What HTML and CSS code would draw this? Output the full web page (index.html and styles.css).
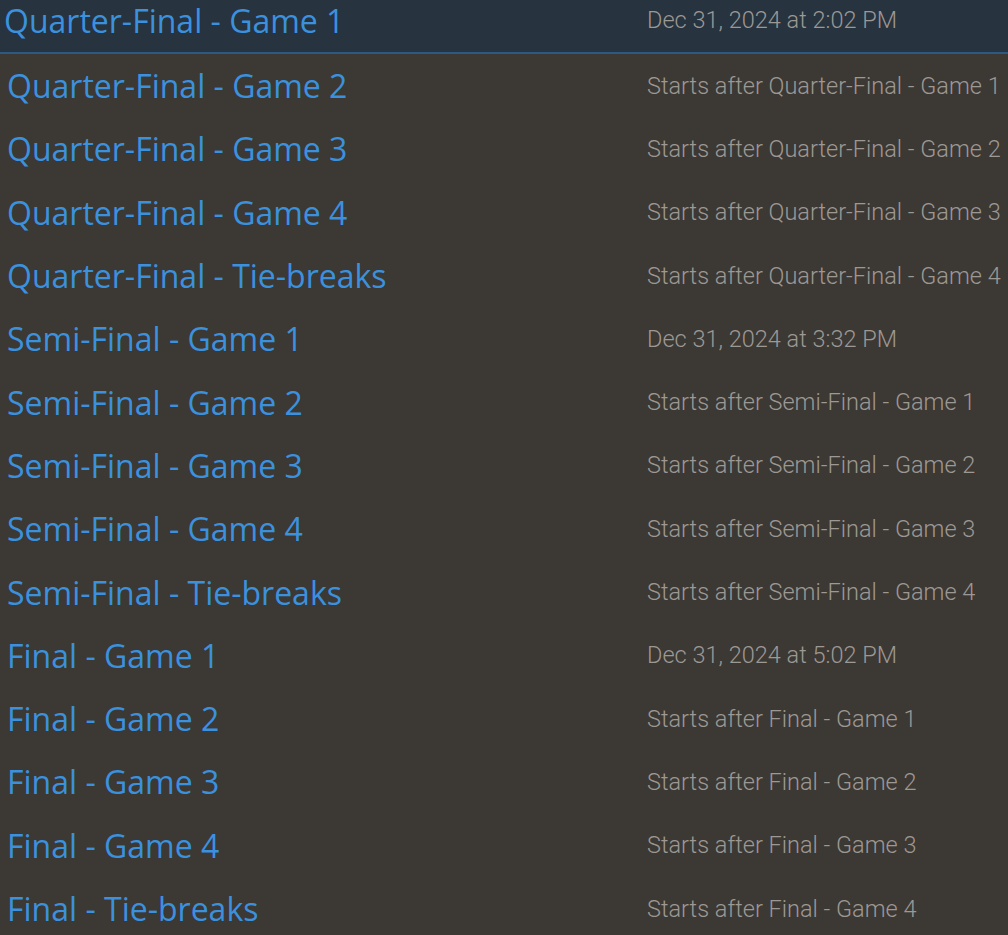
FILE: index.html
```html
<!DOCTYPE html>
<html>
<head>
<meta charset="utf-8">
<link rel="stylesheet" href="styles.css">
</head>
<body>
<ul class="games">
  <li class="game selected"><span class="title">Quarter-Final - Game 1</span><span class="when">Dec 31, 2024 at 2:02 PM</span></li>
  <li class="game"><span class="title">Quarter-Final - Game 2</span><span class="when">Starts after Quarter-Final - Game 1</span></li>
  <li class="game"><span class="title">Quarter-Final - Game 3</span><span class="when">Starts after Quarter-Final - Game 2</span></li>
  <li class="game"><span class="title">Quarter-Final - Game 4</span><span class="when">Starts after Quarter-Final - Game 3</span></li>
  <li class="game"><span class="title">Quarter-Final - Tie-breaks</span><span class="when">Starts after Quarter-Final - Game 4</span></li>
  <li class="game"><span class="title">Semi-Final - Game 1</span><span class="when">Dec 31, 2024 at 3:32 PM</span></li>
  <li class="game"><span class="title">Semi-Final - Game 2</span><span class="when">Starts after Semi-Final - Game 1</span></li>
  <li class="game"><span class="title">Semi-Final - Game 3</span><span class="when">Starts after Semi-Final - Game 2</span></li>
  <li class="game"><span class="title">Semi-Final - Game 4</span><span class="when">Starts after Semi-Final - Game 3</span></li>
  <li class="game"><span class="title">Semi-Final - Tie-breaks</span><span class="when">Starts after Semi-Final - Game 4</span></li>
  <li class="game"><span class="title">Final - Game 1</span><span class="when">Dec 31, 2024 at 5:02 PM</span></li>
  <li class="game"><span class="title">Final - Game 2</span><span class="when">Starts after Final - Game 1</span></li>
  <li class="game"><span class="title">Final - Game 3</span><span class="when">Starts after Final - Game 2</span></li>
  <li class="game"><span class="title">Final - Game 4</span><span class="when">Starts after Final - Game 3</span></li>
  <li class="game"><span class="title">Final - Tie-breaks</span><span class="when">Starts after Final - Game 4</span></li>
</ul>
</body>
</html>
```
FILE: styles.css
```css
html, body {
  margin: 0;
  padding: 0;
  background: #3c3834;
  overflow: hidden;
}
.games {
  list-style: none;
  margin: -12px 0 0 0;
  padding: 0;
}
.game {
  display: grid;
  grid-template-columns: 640px 1fr;
  align-items: center;
  height: 63.3px;
  padding-left: 7px;
  box-sizing: border-box;
}
.game.selected {
  background: #27333f;
  border-bottom: 2px solid #2d5a84;
  height: 66px;
  padding-left: 4px;
  grid-template-columns: 643px 1fr;
}
.title {
  font-family: "Open Sans", "Noto Sans", sans-serif;
  font-size: 32px;
  color: #3b91dd;
  white-space: nowrap;
}
.when {
  font-family: Roboto, sans-serif;
  font-weight: 300;
  font-size: 23.5px;
  color: #9c9894;
  white-space: nowrap;
}
```
